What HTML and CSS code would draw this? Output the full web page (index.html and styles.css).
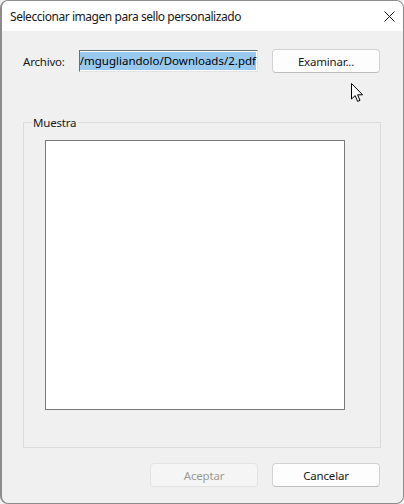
FILE: index.html
```html
<!DOCTYPE html>
<html lang="es">
<head>
  <meta charset="UTF-8" />
  <title>Seleccionar imagen para sello personalizado</title>
  <link rel="stylesheet" href="styles.css">
</head>
<body>
  <div class="ventana">
    <div class="barra-titulo">
      <span class="titulo">Seleccionar imagen para sello personalizado</span>
      <svg class="cerrar" width="11" height="11" viewBox="0 0 11 11">
        <path d="M0.5 0.5 L10.5 10.5 M10.5 0.5 L0.5 10.5" stroke="#1b1b1b" stroke-width="1" fill="none" />
      </svg>
    </div>

    <div class="contenido">
      <div class="fila-archivo">
        <span class="etiqueta">Archivo:</span>
        <div class="campo">
          <span class="seleccion">/mgugliandolo/Downloads/2.pdf</span>
        </div>
        <button class="boton">Examinar...</button>
      </div>

      <fieldset class="grupo">
        <legend>Muestra</legend>
        <div class="vista-previa"></div>
      </fieldset>

      <div class="fila-botones">
        <button class="boton" disabled>Aceptar</button>
        <button class="boton">Cancelar</button>
      </div>
    </div>

    <svg class="puntero" width="13" height="20" viewBox="0 0 13 20">
      <path d="M0.5 0.5 L0.5 16 L4.2 12.6 L6.6 18.4 L9 17.4 L6.6 11.8 L11.6 11.8 Z" fill="#fff" stroke="#000" stroke-width="1" stroke-linejoin="miter" />
    </svg>
  </div>
</body>
</html>
```

FILE: styles.css
```css
* {
  box-sizing: border-box;
}

body {
  margin: 0;
  font-family: 'Noto Sans', 'Open Sans', sans-serif;
  font-size: 11.5px;
  letter-spacing: -0.2px;
  color: #000;
  background: #f0f0f0;
}

.ventana {
  position: relative;
  width: 404px;
  height: 504px;
  border: 1px solid #8c8c8c;
  border-left: 2px solid #8c8c8c;
  border-radius: 8px;
  overflow: hidden;
  background: #f0f0f0;
  display: flex;
  flex-direction: column;
}

.barra-titulo {
  height: 30px;
  flex: none;
  background: #fff;
  display: flex;
  align-items: center;
  justify-content: space-between;
  padding: 0 8px 0 8px;
  font-size: 12px;
  letter-spacing: -0.45px;
}

.titulo {
  color: #1a1a1a;
}

.cerrar {
  margin-top: 1px;
}

.contenido {
  flex: 1;
  padding: 18px 22px 0 21px;
  display: flex;
  flex-direction: column;
}

.fila-archivo {
  display: flex;
  align-items: center;
  height: 24px;
}

.etiqueta {
  width: 56px;
  color: #1a1a1a;
}

.campo {
  width: 179px;
  height: 22px;
  border-top: 1px solid #6d6d6d;
  border-left: 1px solid #6d6d6d;
  border-right: 1px solid #e3e3e3;
  border-bottom: 1px solid #e3e3e3;
  background: #fff;
  display: flex;
  justify-content: flex-end;
  align-items: stretch;
  overflow: hidden;
  white-space: nowrap;
  padding: 1px 1px 1px 0;
}

.seleccion {
  background: #99c9ef;
  color: #000;
  line-height: 18px;
  font-size: 11.5px;
  letter-spacing: 0;
}

.boton {
  width: 108px;
  height: 24px;
  margin-left: 14px;
  font-family: inherit;
  font-size: 11.5px;
  letter-spacing: -0.2px;
  color: #1a1a1a;
  background: #fdfdfd;
  border: 1px solid #d2d2d2;
  border-bottom-color: #bdbdbd;
  border-radius: 4px;
  padding: 0;
}

.boton:disabled {
  background: #f5f5f5;
  border-color: #e3e3e3;
  color: #9a9a9a;
}

.grupo {
  margin: 41px 0 0 0;
  padding: 9px 0 0 21px;
  height: 334px;
  border: 1px solid #dcdcdc;
  min-width: 0;
}

.grupo legend {
  margin-left: -13px;
  padding: 0 2px 0 1px;
  color: #1a1a1a;
  line-height: 17px;
}

.vista-previa {
  width: 300px;
  height: 270px;
  background: #fff;
  border: 1px solid #7a7a7a;
}

.fila-botones {
  display: flex;
  justify-content: flex-end;
  margin-top: 15px;
  padding-right: 1px;
}

.puntero {
  position: absolute;
  left: 349px;
  top: 82px;
}
```
